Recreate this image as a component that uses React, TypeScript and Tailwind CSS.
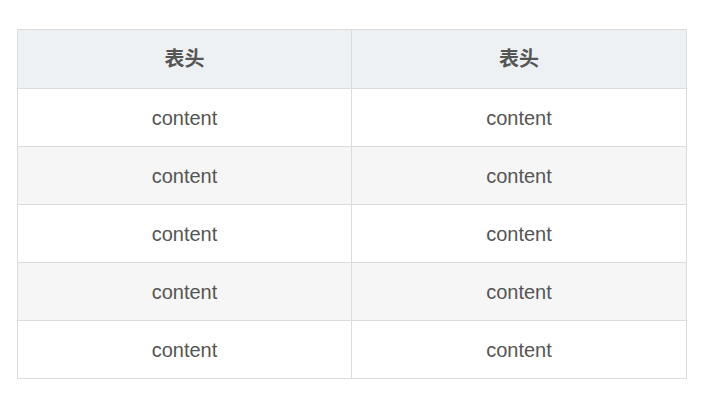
import React from "react";

export default function App() {
  const rows = [0, 1, 2, 3, 4];
  return (
    <div className="w-[704px] h-[403px] bg-white pt-[29px] pl-[17px]" style={{ fontFamily: '"Liberation Sans", Arial, "Noto Sans CJK SC", sans-serif' }}>
      <table className="w-[670px] border-collapse text-[20px] text-[#555555]">
        <thead>
          <tr className="h-[59px] bg-[#eef1f4]">
            <th className="w-[334px] border border-[#dcdcdc] font-bold text-center p-0">表头</th>
            <th className="border border-[#dcdcdc] font-bold text-center p-0">表头</th>
          </tr>
        </thead>
        <tbody>
          {rows.map((i) => (
            <tr key={i} className={`h-[58px] ${i % 2 === 1 ? "bg-[#f6f6f6]" : "bg-white"}`}>
              <td className="border border-[#dcdcdc] text-center p-0">content</td>
              <td className="border border-[#dcdcdc] text-center p-0">content</td>
            </tr>
          ))}
        </tbody>
      </table>
    </div>
  );
}
